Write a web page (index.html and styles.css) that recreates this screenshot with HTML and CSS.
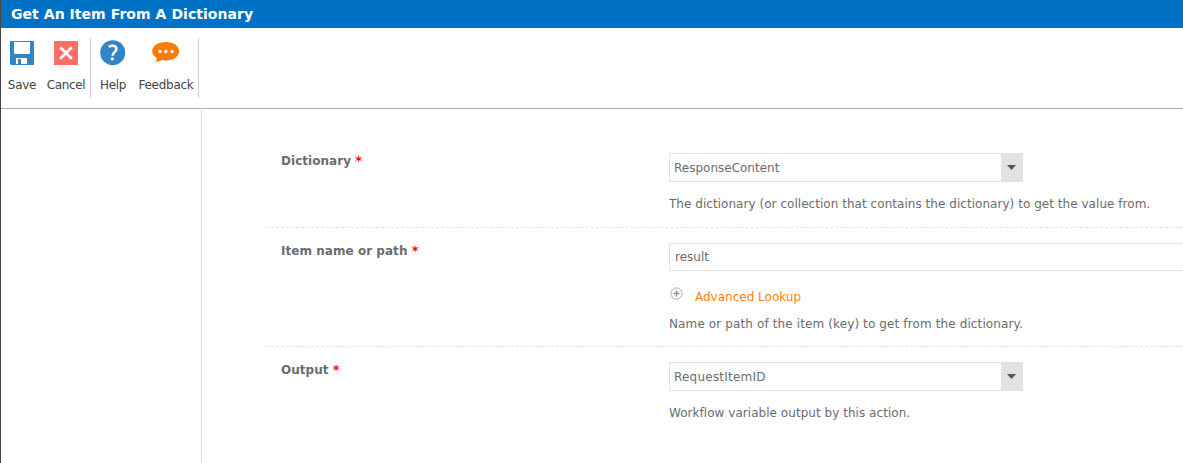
FILE: index.html
```html
<!DOCTYPE html>
<html lang="en">
<head>
<meta charset="utf-8">
<title>Get An Item From A Dictionary</title>
<link rel="stylesheet" href="styles.css">
</head>
<body>
<div class="dialog">
  <header class="title"><span>Get An Item From A Dictionary</span></header>
  <nav class="toolbar">
    <div class="group group-edit">
      <div class="tool save">
        <svg width="24" height="24" viewBox="0 0 24 24"><path fill="#3385c3" d="M0 0h24v24H1l-1-1z"/><path fill="#fff" d="M4 1h16v11l-1 1H5l-1-1zM6 17h11v6H6z"/><path fill="#3385c3" d="M8 18h3v5H8z"/></svg>
        <span>Save</span>
      </div>
      <div class="tool cancel">
        <svg width="24" height="24" viewBox="0 0 24 24"><rect width="24" height="24" rx=".6" fill="#ff6f68"/><path d="M6.200 6.200l11.600 11.600M17.800 6.200L6.200 17.800" stroke="#fff" stroke-width="2.700"/></svg>
        <span>Cancel</span>
      </div>
    </div>
    <div class="group group-info">
      <div class="tool help">
        <svg width="26" height="26" viewBox="0 0 26 26"><circle cx="12.700" cy="12.700" r="12.500" fill="#3385c3"/><path d="M8.800 6.800c1.200-.7 2.300-1 3.600-1 2.500 0 4 1.100 4 3.100 0 3.100-3.900 3.300-3.900 6.800" fill="none" stroke="#fff" stroke-width="2.500"/><circle cx="12.400" cy="18.800" r="1.600" fill="#fff"/></svg>
        <span>Help</span>
      </div>
      <div class="tool feedback">
        <svg width="28" height="22" viewBox="0 0 28 22"><path fill="#ff7b00" d="M13.700 1c7.600 0 13.400 3.800 13.400 9.300s-5.800 9.200-13.400 9.200c-1.600 0-2.800-.1-4.100-.4-1.700 1-3.600 1.500-6.100 1.600.9-1 1.200-2.600.9-4C1.800 15 .2 12.900.2 10.300.2 4.800 6 1 13.700 1z"/><g fill="#fff"><circle cx="8" cy="10.500" r="1.700"/><circle cx="13.800" cy="10.500" r="1.700"/><circle cx="20" cy="10.500" r="1.700"/></g></svg>
        <span>Feedback</span>
      </div>
    </div>
  </nav>
  <div class="content">
    <aside class="side"></aside>
    <main class="form">
      <section class="row">
        <div class="label"><span>Dictionary</span> <b>*</b></div>
        <div class="field">
          <div class="combo"><div class="value">ResponseContent</div><div class="arrow"><svg width="9" height="5" viewBox="0 0 9 5"><path d="M0 0h9L4.500 5z" fill="#555"/></svg></div></div>
          <p class="hint">The dictionary (or collection that contains the dictionary) to get the value from.</p>
        </div>
      </section>
      <section class="row row-item">
        <div class="label"><span>Item name or path</span> <b>*</b></div>
        <div class="field">
          <div class="textbox">result</div>
          <div class="lookup"><svg width="13" height="13" viewBox="0 0 13 13"><circle cx="6.500" cy="6.500" r="5.600" fill="none" stroke="#aaa"/><path d="M3.500 6.500h6M6.500 3.500v6" stroke="#929292" stroke-width="1.600"/></svg><span>Advanced Lookup</span></div>
          <p class="hint">Name or path of the item (key) to get from the dictionary.</p>
        </div>
      </section>
      <section class="row row-output">
        <div class="label"><span>Output</span> <b>*</b></div>
        <div class="field">
          <div class="combo"><div class="value value-id">RequestItemID</div><div class="arrow"><svg width="9" height="5" viewBox="0 0 9 5"><path d="M0 0h9L4.500 5z" fill="#555"/></svg></div></div>
          <p class="hint">Workflow variable output by this action.</p>
        </div>
      </section>
    </main>
  </div>
</div>
</body>
</html>
```
FILE: styles.css
```css
* { box-sizing: border-box; }
body {
  margin: 0;
  overflow: hidden;
  background: #fff;
  color: #6c6c6c;
  font: 12px/16px "DejaVu Sans", sans-serif;
  white-space: nowrap;
}
svg { display: block; flex: none; }
p { margin: 0; }
.dialog { height: 463px; border-left: 1px solid #444; display: flex; flex-direction: column; }
.title {
  height: 28px; flex: none; padding: 6px 0 0 10px;
  background: #0072c6; color: #fff;
  font-size: 14px; font-weight: bold; letter-spacing: .05px;
}
.toolbar { height: 81px; flex: none; display: flex; padding-top: 10px; border-bottom: 1px solid #aaa; color: #444; letter-spacing: -.25px; }
.group { display: flex; height: 60px; border-right: 1px solid #d0d0d0; }
.group-edit { width: 90px; }
.group-info { width: 108px; }
.tool { display: flex; flex-direction: column; align-items: center; justify-content: space-between; padding: 3px 0 5px; }
.save { width: 42px; }
.cancel { width: 46px; }
.help { width: 44px; padding-top: 2px; }
.feedback { width: 62px; }
.cancel, .help { letter-spacing: -.4px; }
.content { display: flex; flex: 1; margin-top: -1px; }
.side { width: 201px; flex: none; border-right: 1px solid #ddd; }
.form { flex: 1; min-width: 0; padding: 30px 0 0 64px; }
.row { display: flex; height: 90px; padding-top: 15px; border-bottom: 1px dashed #e4e4e4; }
.row-item { height: 119px; }
.row-output { border: 0; }
.label { width: 403px; flex: none; padding-left: 15px; font-weight: bold; letter-spacing: .04px; }
.label b { color: #f00; font-size: 13px; }
.field { flex: 1; min-width: 0; }
.combo { display: flex; width: 354px; height: 29px; border: 1px solid #e1e3e2; }
.value { flex: 1; padding: 6px 0 0 4px; }
.value-id { letter-spacing: .22px; }
.arrow { width: 21px; background: #e1e3e2; display: flex; align-items: center; justify-content: center; padding-right: 1px; }
.hint { margin-top: 14px; letter-spacing: .04px; }
.textbox { height: 28px; border: 1px solid #e1e3e2; border-right: 0; padding: 5px 0 0 5px; }
.lookup { display: flex; height: 29px; margin-top: 16px; color: #ff7f0e; }
.lookup svg { margin-left: 1px; }
.lookup span { margin: 2px 0 0 12px; }
.row-item .hint { margin-top: 0; letter-spacing: .12px; }
```
